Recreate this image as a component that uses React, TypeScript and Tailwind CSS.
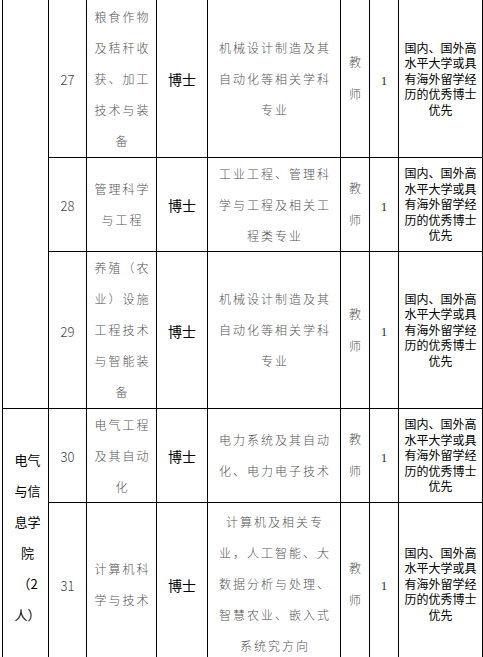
const rows = [
  {
    no: '27',
    major: ['粮食作物', '及秸秆收', '获、加工', '技术与装', '备'],
    field: ['机械设计制造及其', '自动化等相关学科', '专业'],
    h: 'h-[157px]',
  },
  {
    no: '28',
    major: ['管理科学', '与工程'],
    field: ['工业工程、管理科', '学与工程及相关工', '程类专业'],
    h: 'h-[94px]',
  },
  {
    no: '29',
    major: ['养殖（农', '业）设施', '工程技术', '与智能装', '备'],
    field: ['机械设计制造及其', '自动化等相关学科', '专业'],
    h: 'h-[157px]',
  },
  {
    no: '30',
    major: ['电气工程', '及其自动', '化'],
    field: ['电力系统及其自动', '化、电力电子技术'],
    h: 'h-[94px]',
  },
  {
    no: '31',
    major: ['计算机科', '学与技术'],
    field: ['计算机及相关专', '业，人工智能、大', '数据分析与处理、', '智慧农业、嵌入式', '系统究方向'],
    h: 'h-[163px]',
  },
];

const note = ['国内、国外高', '水平大学或具', '有海外留学经', '历的优秀博士', '优先'];

const cell = 'border border-black p-0 align-middle text-center';
const grey = 'text-[12px] leading-[31px] tracking-[2px] text-[#555] font-light';

function Lines({ items, className }: { items: string[]; className: string }) {
  return (
    <div className={className}>
      {items.map((s, i) => (
        <div key={i} className="whitespace-nowrap">
          {s}
        </div>
      ))}
    </div>
  );
}

export default function App() {
  return (
    <div className="w-[483px] h-[657px] overflow-hidden bg-white pl-[2px] font-['Noto_Sans_CJK_SC','Noto_Sans',sans-serif]">
      <table className="table-fixed border-collapse w-[480px]">
        <colgroup>
          <col className="w-[46px]" />
          <col className="w-[38px]" />
          <col className="w-[70px]" />
          <col className="w-[51px]" />
          <col className="w-[133px]" />
          <col className="w-[29px]" />
          <col className="w-[29px]" />
          <col className="w-[84px]" />
        </colgroup>
        <tbody>
          {rows.map((r, i) => (
            <tr key={r.no} className={r.h}>
              {i === 0 && <td rowSpan={3} className={`${cell} border-t-0`} />}
              {i === 3 && (
                <td rowSpan={2} className={cell}>
                  <Lines
                    items={['电气', '与信', '息学', '院', '（2', '人）']}
                    className="text-[13px] leading-[31px] text-black pl-[4px]"
                  />
                </td>
              )}
              <td className={`${cell} ${i === 0 ? 'border-t-0' : ''}`}>
                <span className="text-[13px] text-[#444] font-light">{r.no}</span>
              </td>
              <td className={`${cell} ${i === 0 ? 'border-t-0' : ''}`}>
                <Lines items={r.major} className={`${grey} pl-[2px]`} />
              </td>
              <td className={`${cell} ${i === 0 ? 'border-t-0' : ''}`}>
                <span className="text-[14px] text-black">博士</span>
              </td>
              <td className={`${cell} ${i === 0 ? 'border-t-0' : ''}`}>
                <Lines items={r.field} className={`${grey} pl-[2px]`} />
              </td>
              <td className={`${cell} ${i === 0 ? 'border-t-0' : ''}`}>
                <Lines items={['教', '师']} className="text-[12px] leading-[32px] text-[#555] font-light" />
              </td>
              <td className={`${cell} ${i === 0 ? 'border-t-0' : ''}`}>
                <span className="text-[13px] text-[#333] font-['Liberation_Serif',serif]">1</span>
              </td>
              <td className={`${cell} ${i === 0 ? 'border-t-0' : ''}`}>
                <Lines items={note} className="text-[12px] leading-[15.5px] text-black" />
              </td>
            </tr>
          ))}
        </tbody>
      </table>
    </div>
  );
}
